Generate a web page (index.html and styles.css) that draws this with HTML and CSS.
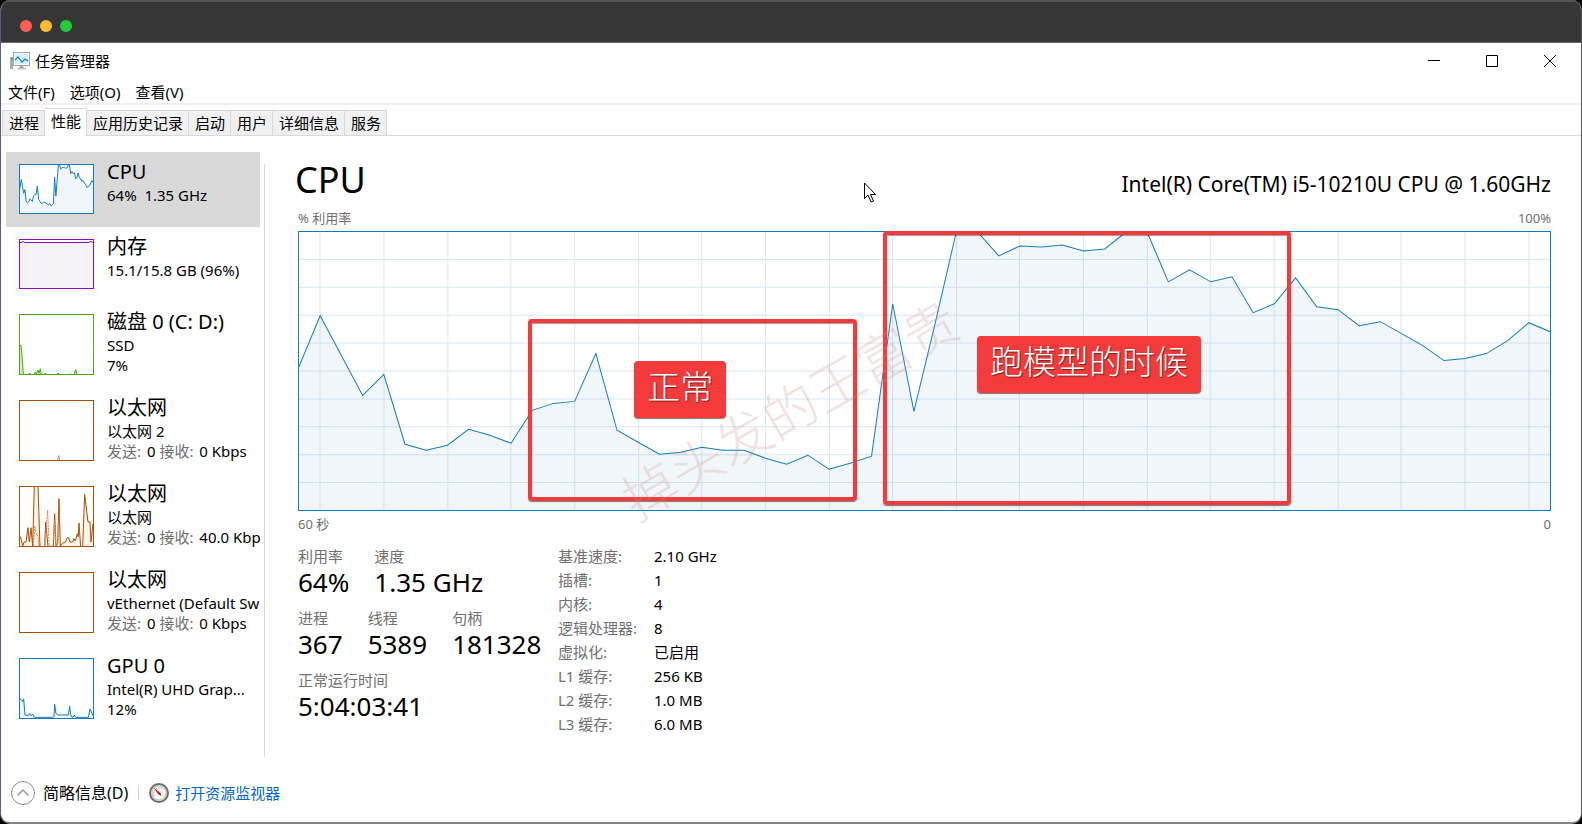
FILE: index.html
```html
<!DOCTYPE html>
<html lang="zh-CN">
<head>
    <meta charset="UTF-8">
    <meta name="viewport" content="width=device-width, initial-scale=1.0">
    <title>任务管理器</title>
    <link rel="stylesheet" href="styles.css">
</head>
<body>
    <div class="frame">
        <div class="mac-bar">
            <span class="dot red"></span>
            <span class="dot yellow"></span>
            <span class="dot green"></span>
        </div>

        <header class="title-bar">
            <svg class="app-icon" width="20" height="18" viewBox="0 0 20 18">
                <rect x="0" y="5" width="3" height="12" fill="#a9adb0"/>
                <rect x="1" y="6" width="2" height="2" fill="#3fce2c"/>
                <rect x="3.500" y="0.500" width="16" height="13" fill="#f4f6f7" stroke="#a3a7aa"/>
                <rect x="5" y="2" width="13" height="10" fill="#d3effa"/>
                <path d="M5 8l3-3 4 5 3-3 3 2" fill="none" stroke="#1d7fbd" stroke-width="1.2"/>
                <path d="M10 14h3l1 2H9z" fill="#a3a7aa"/>
                <path d="M7 16h9v1.500H7z" fill="#bfc3c5"/>
            </svg>
            <h1>任务管理器</h1>
            <div class="controls">
                <button type="button" aria-label="最小化"><svg width="12" height="12" viewBox="0 0 12 12"><path d="M0 5.500h12"/></svg></button>
                <button type="button" aria-label="最大化"><svg width="12" height="12" viewBox="0 0 12 12"><path d="M.5.5h11v11H.5z"/></svg></button>
                <button type="button" aria-label="关闭"><svg width="12" height="12" viewBox="0 0 12 12"><path d="M0 0l12 12M12 0L0 12"/></svg></button>
            </div>
        </header>

        <nav class="menu">
            <button type="button">文件(F)</button>
            <button type="button">选项(O)</button>
            <button type="button">查看(V)</button>
        </nav>

        <div class="tabs">
            <button type="button">进程</button>
            <button type="button" class="active">性能</button>
            <button type="button">应用历史记录</button>
            <button type="button">启动</button>
            <button type="button">用户</button>
            <button type="button">详细信息</button>
            <button type="button">服务</button>
        </div>

        <div class="content">
            <aside class="sidebar">
                <button type="button" class="item selected">
                    <svg class="thumb blue" viewBox="0 0 1252 279" preserveAspectRatio="none">
                        <use href="#cpu-line"/>
                    </svg>
                    <span class="info">
                        <strong>CPU</strong>
                        <span>64%&nbsp; 1.35 GHz</span>
                    </span>
                </button>
                <button type="button" class="item">
                    <svg class="thumb purple" viewBox="0 0 73 48" preserveAspectRatio="none">
                        <path d="M-2 2.500H1l2-1 2 1h63l3-1 2 1h3V50H-2z"/>
                    </svg>
                    <span class="info">
                        <strong>内存</strong>
                        <span>15.1/15.8 GB (96%)</span>
                    </span>
                </button>
                <button type="button" class="item">
                    <svg class="thumb tall green-line" viewBox="0 0 219 177" preserveAspectRatio="none">
                        <path d="M-3 182V90L3 92l3 30 4 57h16l3-5 3 5h9l5-7 3 5 5-12 3 10 4-14 3 18h8l4-5 4 5h30l4-5 4 5h30l3-3 3 3h8l5-16 4 16h46l5-4v10z"/>
                    </svg>
                    <span class="info">
                        <strong>磁盘 0 (C: D:)</strong>
                        <span>SSD</span>
                        <span>7%</span>
                    </span>
                </button>
                <button type="button" class="item">
                    <svg class="thumb tall orange" viewBox="0 0 219 177" preserveAspectRatio="none">
                        <path class="soft" d="M112 180l4-16 4 16z"/>
                    </svg>
                    <span class="info">
                        <strong>以太网</strong>
                        <span>以太网 2</span>
                        <span><em>发送:</em> 0 <em>接收:</em> 0 Kbps</span>
                    </span>
                </button>
                <button type="button" class="item">
                    <svg class="thumb tall orange" viewBox="0 0 219 177" preserveAspectRatio="none">
                        <path d="M-3 180V150L2 150 8 178 12 165H18L24 122 28 165 33 122 38 178 43 -5H54L60 180H74L77 105 84 178H100L104 80 108 178 113 170 117 35 121 178 128 168 136 165 142 152H146L150 165H158L162 155 166 162 172 140 175 150 177 108 182 180H188L194 22 204 105H210L213 165 219 110H225V182z"/>
                        <path class="soft dashed" d="M40 177l4-60 6 28h4l2 32M74 177l9-108 4 108M100 160l4-60 4 77M114 160l4-80"/>
                    </svg>
                    <span class="info">
                        <strong>以太网</strong>
                        <span>以太网</span>
                        <span><em>发送:</em> 0 <em>接收:</em> 40.0 Kbp</span>
                    </span>
                </button>
                <button type="button" class="item">
                    <svg class="thumb tall orange" viewBox="0 0 219 177"></svg>
                    <span class="info">
                        <strong>以太网</strong>
                        <span>vEthernet (Default Sw</span>
                        <span><em>发送:</em> 0 <em>接收:</em> 0 Kbps</span>
                    </span>
                </button>
                <button type="button" class="item">
                    <svg class="thumb tall blue" viewBox="0 0 219 177" preserveAspectRatio="none">
                        <path d="M-3 182V120L3 121 8 128 11 120 15 168 25 170 29 163 33 170 39 166 43 175H98L102 173 104 136 108 164 114 168H145L149 142 153 172 159 175 163 168 167 175H205L210 150 219 170H225V182z"/>
                    </svg>
                    <span class="info">
                        <strong>GPU 0</strong>
                        <span>Intel(R) UHD Grap...</span>
                        <span>12%</span>
                    </span>
                </button>
            </aside>

            <main class="panel">
                <div class="panel-head">
                    <h2>CPU</h2>
                    <p>Intel(R) Core(TM) i5-10210U CPU @ 1.60GHz</p>
                </div>
                <div class="caption">
                    <span>% 利用率</span>
                    <span>100%</span>
                </div>

                <div class="chart">
                    <svg class="plot" viewBox="0 0 1252 279" preserveAspectRatio="none">
                        <defs>
                            <path id="cpu-line" vector-effect="non-scaling-stroke" d="M-30 320V135H0L21.200 84 42.400 124 63.700 164 84.900 143 106.100 213 127.300 219 148.500 214 169.800 198 191 204 212.200 212 233.400 179 254.600 172 275.900 170 297.100 122 318.300 199 339.500 211 360.700 223 382 221 403.200 216 424.400 219H445.600L466.800 227 488.100 233 509.300 224 530.500 238 551.700 232 573 225 594.200 72 615.400 180 636.600 92 657.800 0H679.100L700.300 24 721.500 14 742.700 15 763.900 13 785.200 19 806.400 17 827.600 0H848.800L870 50 891.300 38 912.500 50 933.700 45 954.900 81 976.100 72 997.400 46 1018.600 75 1039.800 78 1061 94 1082.200 90 1103.500 102 1124.700 114 1145.900 129 1167.100 127 1188.300 122 1209.600 109 1230.800 91 1252 100H1290V320z"/>
                        </defs>
                        <path class="grid" d="M0 27.500h1252M0 55.500h1252M0 83.500h1252M0 111.500h1252M0 139.500h1252M0 167.500h1252M0 195.500h1252M0 223.500h1252M0 251.500h1252M21 0v279M85 0v279M149 0v279M212 0v279M276 0v279M340 0v279M403 0v279M467 0v279M531 0v279M594 0v279M658 0v279M721 0v279M785 0v279M849 0v279M912 0v279M976 0v279M1040 0v279M1103 0v279M1167 0v279M1231 0v279"/>
                        <use class="series" href="#cpu-line"/>
                    </svg>
                    <div class="mark mark-normal"></div>
                    <div class="mark mark-model"></div>
                    <span class="note note-normal">正常</span>
                    <span class="note note-model">跑模型的时候</span>
                    <span class="watermark">掉头发的王富贵</span>
                </div>

                <div class="caption bottom">
                    <span>60 秒</span>
                    <span>0</span>
                </div>

                <div class="stats">
                    <div class="live">
                        <dl>
                            <div><dt>利用率</dt><dd>64%</dd></div>
                            <div><dt>速度</dt><dd>1.35 GHz</dd></div>
                        </dl>
                        <dl>
                            <div><dt>进程</dt><dd>367</dd></div>
                            <div><dt>线程</dt><dd>5389</dd></div>
                            <div><dt>句柄</dt><dd>181328</dd></div>
                        </dl>
                        <dl>
                            <div><dt>正常运行时间</dt><dd>5:04:03:41</dd></div>
                        </dl>
                    </div>
                    <table>
                        <tr><th>基准速度:</th><td>2.10 GHz</td></tr>
                        <tr><th>插槽:</th><td>1</td></tr>
                        <tr><th>内核:</th><td>4</td></tr>
                        <tr><th>逻辑处理器:</th><td>8</td></tr>
                        <tr><th>虚拟化:</th><td>已启用</td></tr>
                        <tr><th>L1 缓存:</th><td>256 KB</td></tr>
                        <tr><th>L2 缓存:</th><td>1.0 MB</td></tr>
                        <tr><th>L3 缓存:</th><td>6.0 MB</td></tr>
                    </table>
                </div>

                <svg class="cursor" width="13" height="22" viewBox="0 0 13 22">
                    <path d="M.5 1v15.500l3.500-3.500 3 7 2.500-1-3-6.500h5z" fill="#fff" stroke="#000"/>
                </svg>
            </main>
        </div>

        <footer class="footer">
            <button type="button" class="brief">
                <svg width="24" height="24" viewBox="0 0 24 24" fill="none">
                    <circle cx="12" cy="12" r="11.500" stroke="#8c8c8c"/>
                    <path d="M6.500 14.500L12 9l5.500 5.500" stroke="#9a9a9a" stroke-width="1.500"/>
                </svg>
                简略信息(D)
            </button>
            <a href="#" class="monitor">
                <svg width="20" height="20" viewBox="0 0 20 20">
                    <circle cx="10" cy="10" r="9" fill="#e9e9e6" stroke="#6d6d6d" stroke-width="2"/>
                    <circle cx="10" cy="10" r="7" fill="#fbfbf8" stroke="#b9b9b4"/>
                    <path d="M5 13a6 6 0 0 1 9-7" fill="none" stroke="#8b8b80" stroke-dasharray="1 1.500"/>
                    <path d="M4.500 4.500l7 5.500 1 3-3-1.500z" fill="#d3131c"/>
                </svg>
                打开资源监视器
            </a>
        </footer>
    </div>
</body>
</html>
```
FILE: styles.css
```css
* {
    box-sizing: border-box;
}
body {
    margin: 0;
    background: #000;
    color: #000;
    font-family: "Noto Sans", "Noto Sans CJK SC", sans-serif;
    font-size: 15px;
    line-height: 20px;
}
h1, h2, p, dl, dd {
    margin: 0;
    font-weight: normal;
}
button {
    padding: 0;
    border: 0;
    background: none;
    color: inherit;
    font: inherit;
    white-space: nowrap;
}
svg {
    display: block;
    flex: none;
}
.frame {
    display: flex;
    flex-direction: column;
    min-height: 100vh;
    background: #fff;
    border: 1px solid #56627a;
    border-top: 0;
    border-right-color: #555;
    border-bottom: 2px solid #858585;
    border-radius: 10px;
    overflow: hidden;
}
.mac-bar {
    display: flex;
    align-items: center;
    gap: 8px;
    height: 43px;
    padding: 7px 19px 0;
    background: #363636;
    border-top: 2px solid #555;
    border-bottom: 1px solid #6b6b6b;
}
.dot {
    width: 12px;
    height: 12px;
    border-radius: 50%;
}
.red {
    background: #ff5f57;
}
.yellow {
    background: #febc2e;
}
.green {
    background: #28c840;
}

/* title, menu, tabs */
.title-bar {
    display: flex;
    align-items: center;
    height: 36px;
    padding: 0 2px 0 9px;
}
.title-bar h1 {
    margin-left: 5px;
    font-size: 15px;
}
.controls {
    display: flex;
    margin-left: auto;
}
.controls button {
    display: flex;
    justify-content: center;
    width: 58px;
}
.controls path {
    fill: none;
    stroke: #000;
}
.menu {
    display: flex;
    gap: 15px;
    padding: 3px 7px 1px;
    border-bottom: 2px solid #f0f0f0;
}
.tabs {
    display: flex;
    align-items: flex-end;
    height: 31px;
    padding-left: 1px;
    border-bottom: 1px solid #d9d9d9;
}
.tabs button {
    height: 25px;
    padding: 0 5px 0 6px;
    background: #f0f0f0;
    border: 1px solid #d9d9d9;
    border-width: 1px 1px 0 0;
}
.tabs button:first-child {
    border-left-width: 1px;
}
.tabs .active {
    height: 28px;
    margin-bottom: -1px;
    padding-bottom: 4px;
    background: #fff;
}

/* resource list */
.content {
    display: flex;
    flex: 1;
    padding: 16px 0 0 5px;
}
.sidebar {
    flex: none;
    width: 258px;
    overflow: hidden;
}
.item {
    display: flex;
    width: 254px;
    padding: 0 0 13px 13px;
    text-align: left;
}
.selected {
    background: #d9d9d9;
}
.thumb {
    width: 75px;
    height: 50px;
    margin-top: 12px;
    border: 1px solid;
    background: #fff;
    fill: #f1f6fa;
    stroke: currentColor;
}
.thumb path {
    vector-effect: non-scaling-stroke;
}
.tall {
    height: 61px;
}
.blue {
    color: #117dbb;
}
.purple {
    color: #8b12ae;
    fill: #f4f2f4;
}
.green-line {
    color: #4da60c;
    fill: #d8edc8;
}
.orange {
    color: #a74f01;
    fill: #fcf3eb;
}
.soft {
    stroke: #e9825a;
}
.dashed {
    fill: none;
    stroke-dasharray: 2 1;
}
.info {
    height: 50px;
    margin-left: 13px;
    padding-top: 6px;
}
.info span {
    display: block;
}
.info strong {
    display: block;
    font-size: 20px;
    font-weight: normal;
    line-height: 27px;
}
.info em {
    margin-right: 2px;
    color: #707070;
    font-style: normal;
}

/* cpu panel */
.panel {
    position: relative;
    flex: 1;
    min-width: 0;
    margin-top: 12px;
    padding: 0 30px 20px 33px;
    border-left: 1px solid #d9d9d9;
}
.panel-head {
    display: flex;
    justify-content: space-between;
    height: 44px;
}
.panel-head h2 {
    margin-left: -3px;
    font-size: 36px;
    line-height: 32px;
}
.panel-head p {
    font-size: 21px;
    line-height: 40px;
}
.caption {
    display: flex;
    justify-content: space-between;
    margin-bottom: 3px;
    color: #707070;
    font-size: 13px;
}
.caption.bottom {
    margin: 3px 0 10px;
}
.chart {
    position: relative;
    height: 280px;
    border: 1px solid #117dbb;
}
.plot {
    width: 100%;
    height: 100%;
}
.grid {
    fill: none;
    stroke: #d9e8f2;
    vector-effect: non-scaling-stroke;
}
.series {
    fill: rgba(17, 105, 170, 0.06);
    stroke: #117dbb;
}
.mark {
    position: absolute;
    border: 4px solid #f33b3b;
    border-radius: 4px;
    box-shadow: 0 1px 1px rgba(0, 0, 0, 0.5), inset 0 1px 1px rgba(0, 0, 0, 0.4);
}
.mark-normal {
    top: 87px;
    left: 18.3%;
    width: 26.3%;
    height: 182px;
}
.mark-model {
    top: -1px;
    left: 46.7%;
    width: 32.6%;
    height: 274px;
}
.note {
    position: absolute;
    padding: 0 13px 9px;
    background: #f33b3b;
    border-radius: 4px;
    box-shadow: 0 1px 1px rgba(0, 0, 0, 0.5);
    color: #fff;
    font-family: "Noto Sans CJK SC", sans-serif;
    font-size: 33px;
    font-weight: 300;
    line-height: 48px;
    text-shadow: 1px 1px 1px rgba(0, 0, 0, 0.5);
    white-space: nowrap;
}
.note-normal {
    top: 129px;
    left: 26.8%;
}
.note-model {
    top: 104px;
    left: 54.2%;
}
.watermark {
    position: absolute;
    top: 176px;
    left: 39.2%;
    color: rgba(205, 140, 140, 0.25);
    font-family: "Noto Sans CJK SC", sans-serif;
    font-size: 54px;
    font-weight: 300;
    line-height: 54px;
    white-space: nowrap;
    transform: translate(-50%, -50%) rotate(-30deg);
}
.cursor {
    position: absolute;
    top: 18px;
    left: 45.5%;
}

.stats {
    display: flex;
}
.live {
    width: 260px;
    padding-top: 2px;
}
.live dl {
    display: flex;
    gap: 25px;
    margin-bottom: 10px;
}
.live dd {
    font-size: 26px;
    line-height: 32px;
}
dt, th {
    color: #707070;
}
table {
    border-collapse: collapse;
}
th, td {
    height: 24px;
    padding: 0;
    font-weight: normal;
    text-align: left;
}
th {
    width: 96px;
}

.footer {
    display: flex;
    align-items: center;
    padding: 21px 10px 14px;
    line-height: 30px;
}
.brief, .monitor {
    display: flex;
    align-items: center;
    gap: 8px;
}
.brief {
    font-size: 16px;
}
.monitor {
    gap: 6px;
    margin-left: 10px;
    color: #0066cc;
    text-decoration: none;
}
.monitor::before {
    content: "";
    width: 1px;
    height: 14px;
    margin-right: 4px;
    background: #d0d0d0;
}
```
